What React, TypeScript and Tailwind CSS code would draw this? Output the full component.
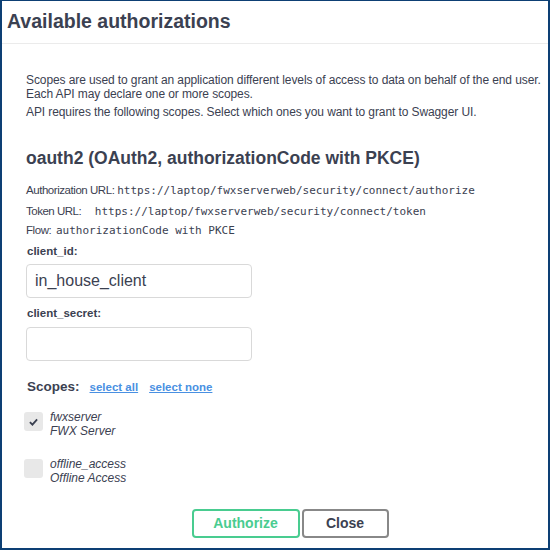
export default function App() {
  const sans = "font-['Liberation_Sans',Arial,sans-serif]";
  const mono = "font-['DejaVu_Sans_Mono',monospace] text-[11px] tracking-normal";

  return (
    <div
      className={`w-[550px] h-[550px] bg-white border-t border-l-2 border-r-2 border-b-2 border-[#0d3f74] text-[#3b4151] ${sans} overflow-hidden flex flex-col`}
    >
      {/* header */}
      <div className="h-[43px] shrink-0 border-b border-[#ebebeb] flex items-center pl-[5px]">
        <h4 className="text-[19.5px] font-bold leading-none">Available authorizations</h4>
      </div>

      <div className="pl-[24px] pr-[4px] pt-[29px] flex flex-col">
        <p className="text-[12px] tracking-[-0.1px] leading-[14px]">
          Scopes are used to grant an application different levels of access to data on behalf of the end user.
          <br />
          Each API may declare one or more scopes.
        </p>
        <p className="text-[12px] tracking-[-0.1px] leading-[14px] mt-[4px]">
          API requires the following scopes. Select which ones you want to grant to Swagger UI.
        </p>

        <h4 className="text-[17.5px] font-bold leading-[20px] mt-[29px]">
          oauth2 (OAuth2, authorizationCode with PKCE)
        </h4>

        {/* flow details */}
        <p className="text-[11.5px] tracking-[-0.45px] leading-[16px] mt-[14px]">
          Authorization URL: <code className={mono}>https://laptop/fwxserverweb/security/connect/authorize</code>
        </p>
        <p className="text-[11.5px] tracking-[-0.5px] leading-[16px] mt-[4px]">
          Token URL: <code className={`${mono} ml-[11px]`}>https://laptop/fwxserverweb/security/connect/token</code>
        </p>
        <p className="text-[11.5px] tracking-[-0.45px] leading-[16px] mt-[2px]">
          Flow: <code className={`${mono} ml-[2px]`}>authorizationCode with PKCE</code>
        </p>

        <label className="text-[11.5px] font-bold leading-[16px] mt-[4px] ml-[1px]">client_id:</label>
        <div className="mt-[5px] w-[226px] h-[34px] border border-[#d9d9d9] rounded-[4px] flex items-center px-[8px] text-[16px]">
          in_house_client
        </div>

        <label className="text-[11.5px] font-bold leading-[16px] mt-[7px] ml-[1px]">client_secret:</label>
        <div className="mt-[6px] w-[226px] h-[34px] border border-[#d9d9d9] rounded-[4px]" />

        <div className="flex items-baseline mt-[16px] ml-[1px]">
          <span className="text-[13.5px] font-bold">Scopes:</span>
          <a className="ml-[10px] text-[11.5px] font-bold text-[#4990e2] underline">select all</a>
          <a className="ml-[11px] text-[11.5px] font-bold text-[#4990e2] underline">select none</a>
        </div>

        <div className="flex mt-[13px] -ml-[2px]">
          <div className="w-[19px] h-[19px] rounded-[3px] bg-[#e8e8e8] flex items-center justify-center mt-[2px]">
            <svg width="9" height="8" viewBox="0 0 10 8">
              <path d="M1 4.2 L3.8 7 L9 1" fill="none" stroke="#3b4151" strokeWidth="2" />
            </svg>
          </div>
          <div className="ml-[7px] text-[12px] italic leading-[14px] text-[#3b4151]">
            <div>fwxserver</div>
            <div>FWX Server</div>
          </div>
        </div>

        <div className="flex mt-[19px] -ml-[2px]">
          <div className="w-[19px] h-[19px] rounded-[3px] bg-[#e8e8e8] mt-[2px]" />
          <div className="ml-[7px] text-[12px] italic leading-[14px] text-[#3b4151]">
            <div>offline_access</div>
            <div>Offline Access</div>
          </div>
        </div>

        <div className="flex justify-center gap-[2px] mt-[24px] pl-[10px]">
          <button className="w-[108px] h-[29px] border-2 border-[#49cc90] rounded-[4px] text-[#49cc90] text-[14px] font-bold">
            Authorize
          </button>
          <button className="w-[87px] h-[29px] border-2 border-[#888] rounded-[4px] text-[#3b4151] text-[14px] font-bold">
            Close
          </button>
        </div>
      </div>
    </div>
  );
}
